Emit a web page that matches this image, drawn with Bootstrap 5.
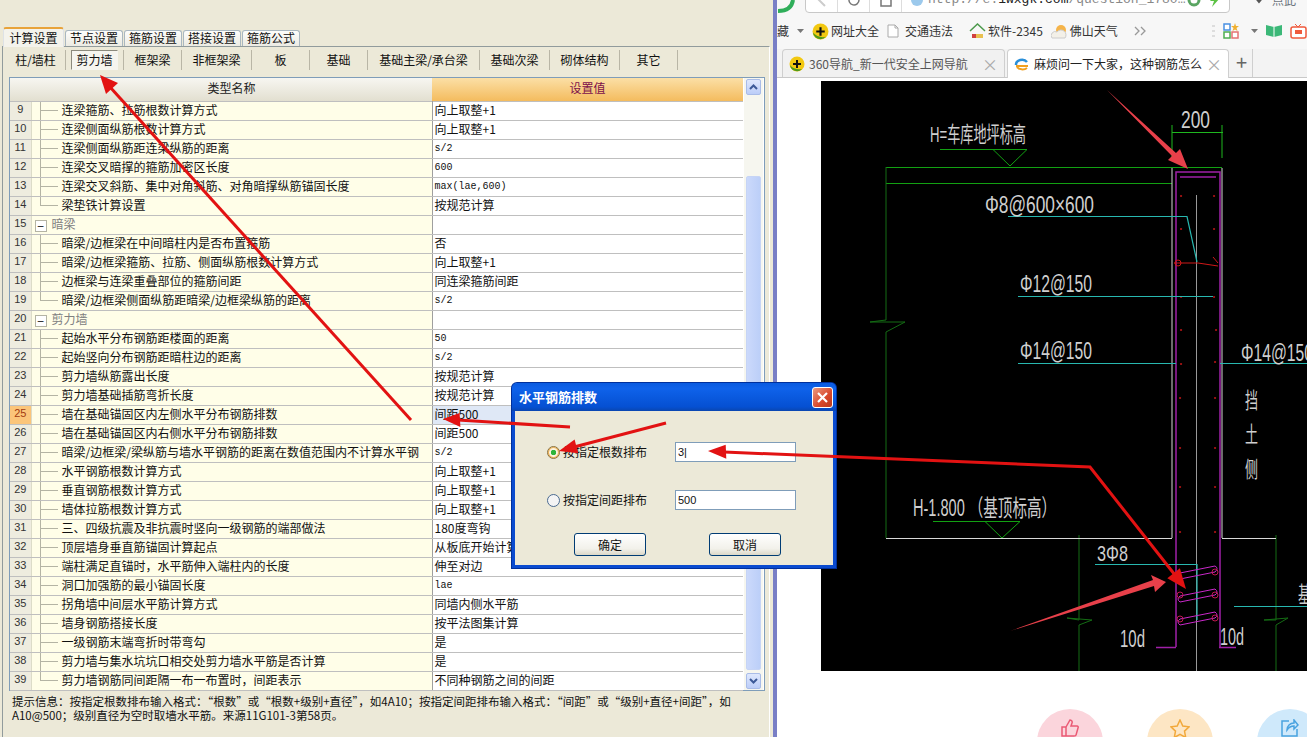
<!DOCTYPE html>
<html lang="zh-CN">
<head>
  <meta charset="UTF-8">
  <title>水平钢筋排数</title>
  <link href="https://cdn.jsdelivr.net/npm/bootstrap@5.3.0/dist/css/bootstrap.min.css" rel="stylesheet">
  <style>
    html, body { height: 737px; overflow: hidden; }
    body { font-family: "Noto Sans CJK SC", "Liberation Sans", sans-serif; font-size: 12px; color: #111; background: #fff; }
    .page-wrap { height: 737px; }

    /* left: settings window */
    .calc-pane { width: 773px; flex: none; background: #ece9d8; padding: 27px 0 0 2px; }
    .calc-tabs { padding-left: 1px; height: 19px; border: 0; gap: 1px; position: relative; z-index: 1; flex: none; }
    .calc-tabs .nav-link { font-size: 12px; line-height: 14px; height: 16px; margin: 0; padding: 0; width: 58px; text-align: center; color: #111; background: linear-gradient(#fdfdfb, #ecebe3); border: 1px solid #a9b7c0; border-bottom: 0; border-radius: 3px 3px 0 0; }
    .calc-tabs .nav-link.active { width: 61px; height: 20px; line-height: 17px; margin-bottom: -1px; background: #f4f3ec; border-top: 2px solid #e8a33a; color: #111; }
    .calc-box { width: 768px; height: 691px; border: 1px solid #919b9c; border-right-color: #fff; border-bottom: 0; background: #ece9d8; padding: 0 4px 0 6px; }
    .sub-bar { height: 30px; margin-left: -3px; padding-top: 3px; }
    .sub-btn { height: 20px; line-height: 19px; text-align: center; font-size: 12px; border-right: 1px solid #b9b6a6; flex: none; }
    .sub-btn span { display: inline-block; height: 20px; line-height: 18px; }
    .sub-btn .pressed { background: #f6f5ef; border: 1px solid; border-color: #8c8a7d #f6f5ef #f6f5ef #8c8a7d; width: 47px; }
    .w60 { width: 60px; } .w58 { width: 58px; } .w70 { width: 70px; } .w112 { width: 112px; }
    .grid-box { height: 614px; border: 1px solid #7f9db9; background: #fff; }
    .grid-main { width: 734px; flex: none; }
    .calc-grid { table-layout: fixed; width: 733px; border-collapse: collapse; }
    .calc-grid > thead > tr > th { height: 23px; padding: 0 0 2px; font-weight: 400; font-size: 12px; text-align: center; vertical-align: middle; border: 0; background: linear-gradient(#f7f6f1, #e2dfd0); color: #222; }
    .calc-grid > thead > tr > th.val-head { background: linear-gradient(#fbdfa6, #f4bc5e); color: #7c0f4a; }
    .calc-grid > tbody > tr > td { height: 19px; padding: 0; line-height: 15px; font-size: 12px; white-space: nowrap; overflow: hidden; border: 1px solid #bfbfbf; border-left: 0; border-right: 0; color: #111; }
    .calc-grid > tbody > tr > td.num-cell { text-align: center; background: #eeecdf; color: #333; font-size: 11px; font-family: "Liberation Sans", sans-serif; }
    .calc-grid > tbody > tr > td.num-cell.cur { background: #fbc57a; color: #a33b10; }
    .calc-grid > tbody > tr > td.name-cell { background-color: #fffee8; padding-left: 30px; border-left: 1px solid #dcdcc8; border-right: 1px solid #9f9f9f; background-image: linear-gradient(#b4b4a4, #b4b4a4), linear-gradient(#b4b4a4, #b4b4a4); background-repeat: no-repeat; background-position: 8px 0, 8px 50%; background-size: 1px 100%, 18px 1px; }
    .calc-grid > tbody > tr > td.name-cell.last { background-size: 1px 50%, 18px 1px; }
    .calc-grid > tbody > tr > td.name-cell.group { padding-left: 3px; background-image: none; color: #808080; }
    .calc-grid > tbody > tr > td.val-cell { padding-left: 2px; background: #fff; }
    .calc-grid > tbody > tr > td.val-cell.cur { background: #dfe8f6; }
    .calc-grid > tbody > tr > td.val-cell.latin { font-family: "Liberation Mono", monospace; font-size: 10px; line-height: 17px; }
    .fold-box { display: inline-block; width: 12px; height: 12px; line-height: 9px; border: 1px solid #b4b4a4; background: #fff; text-align: center; color: #111; margin-right: 5px; vertical-align: -2px; font-size: 12px; }
    .scroll-col { width: 19px; flex: none; background: #f6f6ef; padding: 1px 2px; }
    .scroll-btn { height: 16px; flex: none; background: linear-gradient(#dfe8fd, #bccdf8); border: 1px solid #a9bce8; border-radius: 2px; }
    .scroll-track { flex: 1; padding-top: 81px; }
    .scroll-thumb { height: 494px; background: linear-gradient(90deg, #cbd9fb, #bccff8); border: 1px solid #c6d4f5; border-radius: 2px; }
    .hint-text { font-size: 11.5px; line-height: 14px; padding: 3px 0 0 3px; color: #111; white-space: nowrap; }
    .split-bar { width: 4px; flex: none; background: #797fc6; }

    /* dialog */
    .xp-dlg { left: 512px; top: 383px; width: 324px; height: 185px; background: #ece9d8; border: 3px solid #0a4bd0; border-top: 0; border-radius: 5px 5px 0 0; z-index: 5; box-shadow: 0 0 0 1px #00309c; }
    .dlg-title { height: 28px; margin: 0 -3px; padding: 0 3px 0 7px; background: linear-gradient(#0a5be0, #0f62ea 20%, #0550d2 85%, #0a46b0); border-radius: 5px 5px 0 0; color: #fff; font-weight: 700; font-size: 13px; flex: none; }
    .dlg-close { width: 21px; height: 21px; padding: 0; border: 1px solid #fff; border-radius: 3px; background: linear-gradient(135deg, #ec9a80, #d8472b 60%, #b9391c); }
    .dlg-body { padding: 31px 0 0 32px; }
    .dlg-row { height: 20px; margin-bottom: 28px; }
    .dlg-row label { width: 112px; flex: none; font-size: 12px; }
    .xp-radio.form-check-input { width: 13px; height: 13px; margin: 0 3px 0 0; flex: none; background: #f4f4f4; border: 1px solid #4a6a90; float: none; }
    .xp-radio.form-check-input:checked { background: radial-gradient(circle, #2fb53b 0 2.5px, #fbf3df 3px); border: 1px solid #8a7240; box-shadow: inset 0 0 0 1px #f0b050; }
    .xp-input.form-control { width: 121px; height: 20px; min-height: 20px; padding: 0 2px; font-size: 11px; border: 1px solid #7f9db9; border-radius: 0; color: #111; font-family: "Liberation Sans", sans-serif; }
    .xp-btn.btn { width: 72px; height: 23px; padding: 0; font-size: 12px; line-height: 20px; color: #111; border: 1px solid #003c74; border-radius: 3px; background: linear-gradient(#fff, #f2f1ea 70%, #dcd8c8); }
    .dlg-btns { padding-left: 27px; margin-top: -5px; gap: 63px; }

    /* right: browser */
    .browser-pane { flex: 1; min-width: 0; overflow: hidden; background: #fff; }
    .browser-pane > * { flex: none; }
    .addr-row { height: 13px; overflow: hidden; background: #f7f7f7; }
    .addr-inner { height: 26px; margin-top: -13px; }
    .addr-logo { flex: none; align-self: flex-end; }
    .addr-box { margin-left: 10px; width: 425px; height: 26px; border: 1px solid #c8c8c8; border-radius: 4px; background: #fff; flex: none; color: #888; font-family: "Liberation Mono", monospace; font-size: 13px; }
    .addr-seg { width: 32px; height: 24px; border-right: 1px solid #ddd; flex: none; }
    .addr-url b { font-weight: 400; color: #222; }
    .fav-row { height: 36px; background: #f7f7f7; color: #333; font-size: 12px; }
    .fav-item { gap: 2px; flex: none; }
    .tab-row { height: 29px; background: #f3f3f3; border-bottom: 1px solid #c9c9c9; padding-left: 5px; gap: 2px; }
    .br-tab { width: 223px; height: 28px; padding: 0 6px; border: 1px solid #cfcfcf; border-bottom: 0; border-radius: 4px 4px 0 0; background: #f1f1f1; color: #555; font-size: 12px; gap: 4px; overflow: hidden; }
    .br-tab.on { background: #fff; color: #222; height: 29px; margin-bottom: -1px; width: 222px; }
    .br-tab .ttl { flex: 1; white-space: nowrap; overflow: hidden; }
    .tab-x { color: #aaa; font-size: 16px; line-height: 1; }
    .tab-plus { width: 22px; height: 28px; color: #666; font-size: 20px; line-height: 26px; text-align: center; border-right: 1px solid #cfcfcf; }
    .cad-wrap { margin: 3px 0 0 44px; width: 486px; height: 590px; background: #000; }
    .cad-wrap svg { display: block; }
    .cad-wrap text { font-family: "Liberation Sans", "Noto Sans CJK SC", sans-serif; fill: #cfcfcf; }
    .share-row { margin: 38px 0 0 260px; gap: 44px; }
    .share-dot { width: 66px; height: 66px; border-radius: 50%; flex: none; padding-top: 10px; }
    .dot-pink { background: #fbd5dc; } .dot-amber { background: #fde6c4; } .dot-sky { background: #cfe9fb; }
    .arrow-layer { left: 0; top: 0; z-index: 9; pointer-events: none; }
  </style>
</head>
<body>
<div class="page-wrap d-flex position-relative">

  <div class="calc-pane d-flex flex-column">
    <ul class="nav nav-tabs calc-tabs align-items-end">
      <li class="nav-item"><a class="nav-link active" href="#">计算设置</a></li>
      <li class="nav-item"><a class="nav-link" href="#">节点设置</a></li>
      <li class="nav-item"><a class="nav-link" href="#">箍筋设置</a></li>
      <li class="nav-item"><a class="nav-link" href="#">搭接设置</a></li>
      <li class="nav-item"><a class="nav-link" href="#">箍筋公式</a></li>
    </ul>
    <div class="calc-box flex-grow-1">
      <div class="sub-bar d-flex">
        <div class="sub-btn w60"><span>柱/墙柱</span></div>
        <div class="sub-btn w58"><span class="pressed">剪力墙</span></div>
        <div class="sub-btn w58"><span>框架梁</span></div>
        <div class="sub-btn w70"><span>非框架梁</span></div>
        <div class="sub-btn w58"><span>板</span></div>
        <div class="sub-btn w58"><span>基础</span></div>
        <div class="sub-btn w112"><span>基础主梁/承台梁</span></div>
        <div class="sub-btn w70"><span>基础次梁</span></div>
        <div class="sub-btn w70"><span>砌体结构</span></div>
        <div class="sub-btn w58"><span>其它</span></div>
      </div>
      <div class="grid-box d-flex">
        <div class="grid-main">
          <table class="table calc-grid mb-0">
            <colgroup><col style="width:21px"><col style="width:401px"><col style="width:311px"></colgroup>
            <thead><tr><th></th><th>类型名称</th><th class="val-head">设置值</th></tr></thead>
            <tbody>
              <tr><td class="num-cell">9</td><td class="name-cell">连梁箍筋、拉筋根数计算方式</td><td class="val-cell">向上取整+1</td></tr>
              <tr><td class="num-cell">10</td><td class="name-cell">连梁侧面纵筋根数计算方式</td><td class="val-cell">向上取整+1</td></tr>
              <tr><td class="num-cell">11</td><td class="name-cell">连梁侧面纵筋距连梁纵筋的距离</td><td class="val-cell latin">s/2</td></tr>
              <tr><td class="num-cell">12</td><td class="name-cell">连梁交叉暗撑的箍筋加密区长度</td><td class="val-cell latin">600</td></tr>
              <tr><td class="num-cell">13</td><td class="name-cell">连梁交叉斜筋、集中对角斜筋、对角暗撑纵筋锚固长度</td><td class="val-cell latin">max(lae,600)</td></tr>
              <tr><td class="num-cell">14</td><td class="name-cell last">梁垫铁计算设置</td><td class="val-cell">按规范计算</td></tr>
              <tr><td class="num-cell">15</td><td class="name-cell group"><span class="fold-box">−</span>暗梁</td><td class="val-cell"></td></tr>
              <tr><td class="num-cell">16</td><td class="name-cell">暗梁/边框梁在中间暗柱内是否布置箍筋</td><td class="val-cell">否</td></tr>
              <tr><td class="num-cell">17</td><td class="name-cell">暗梁/边框梁箍筋、拉筋、侧面纵筋根数计算方式</td><td class="val-cell">向上取整+1</td></tr>
              <tr><td class="num-cell">18</td><td class="name-cell">边框梁与连梁重叠部位的箍筋间距</td><td class="val-cell">同连梁箍筋间距</td></tr>
              <tr><td class="num-cell">19</td><td class="name-cell last">暗梁/边框梁侧面纵筋距暗梁/边框梁纵筋的距离</td><td class="val-cell latin">s/2</td></tr>
              <tr><td class="num-cell">20</td><td class="name-cell group"><span class="fold-box">−</span>剪力墙</td><td class="val-cell"></td></tr>
              <tr><td class="num-cell">21</td><td class="name-cell">起始水平分布钢筋距楼面的距离</td><td class="val-cell latin">50</td></tr>
              <tr><td class="num-cell">22</td><td class="name-cell">起始竖向分布钢筋距暗柱边的距离</td><td class="val-cell latin">s/2</td></tr>
              <tr><td class="num-cell">23</td><td class="name-cell">剪力墙纵筋露出长度</td><td class="val-cell">按规范计算</td></tr>
              <tr><td class="num-cell">24</td><td class="name-cell">剪力墙基础插筋弯折长度</td><td class="val-cell">按规范计算</td></tr>
              <tr><td class="num-cell cur">25</td><td class="name-cell">墙在基础锚固区内左侧水平分布钢筋排数</td><td class="val-cell cur">间距500</td></tr>
              <tr><td class="num-cell">26</td><td class="name-cell">墙在基础锚固区内右侧水平分布钢筋排数</td><td class="val-cell">间距500</td></tr>
              <tr><td class="num-cell">27</td><td class="name-cell">暗梁/边框梁/梁纵筋与墙水平钢筋的距离在数值范围内不计算水平钢</td><td class="val-cell latin">s/2</td></tr>
              <tr><td class="num-cell">28</td><td class="name-cell">水平钢筋根数计算方式</td><td class="val-cell">向上取整+1</td></tr>
              <tr><td class="num-cell">29</td><td class="name-cell">垂直钢筋根数计算方式</td><td class="val-cell">向上取整+1</td></tr>
              <tr><td class="num-cell">30</td><td class="name-cell">墙体拉筋根数计算方式</td><td class="val-cell">向上取整+1</td></tr>
              <tr><td class="num-cell">31</td><td class="name-cell">三、四级抗震及非抗震时竖向一级钢筋的端部做法</td><td class="val-cell">180度弯钩</td></tr>
              <tr><td class="num-cell">32</td><td class="name-cell">顶层墙身垂直筋锚固计算起点</td><td class="val-cell">从板底开始计算</td></tr>
              <tr><td class="num-cell">33</td><td class="name-cell">端柱满足直锚时，水平筋伸入端柱内的长度</td><td class="val-cell">伸至对边</td></tr>
              <tr><td class="num-cell">34</td><td class="name-cell">洞口加强筋的最小锚固长度</td><td class="val-cell latin">lae</td></tr>
              <tr><td class="num-cell">35</td><td class="name-cell">拐角墙中间层水平筋计算方式</td><td class="val-cell">同墙内侧水平筋</td></tr>
              <tr><td class="num-cell">36</td><td class="name-cell">墙身钢筋搭接长度</td><td class="val-cell">按平法图集计算</td></tr>
              <tr><td class="num-cell">37</td><td class="name-cell">一级钢筋末端弯折时带弯勾</td><td class="val-cell">是</td></tr>
              <tr><td class="num-cell">38</td><td class="name-cell">剪力墙与集水坑坑口相交处剪力墙水平筋是否计算</td><td class="val-cell">是</td></tr>
              <tr><td class="num-cell">39</td><td class="name-cell last">剪力墙钢筋同间距隔一布一布置时，间距表示</td><td class="val-cell">不同种钢筋之间的间距</td></tr>
            </tbody>
          </table>
        </div>
        <div class="scroll-col d-flex flex-column">
          <div class="scroll-btn d-flex align-items-center justify-content-center">
            <svg width="9" height="6" viewBox="0 0 9 6"><path d="M1 5 4.500 1.500 8 5" fill="none" stroke="#3d5a98" stroke-width="2"/></svg>
          </div>
          <div class="scroll-track"><div class="scroll-thumb"></div></div>
          <div class="scroll-btn d-flex align-items-center justify-content-center">
            <svg width="9" height="6" viewBox="0 0 9 6"><path d="M1 1 4.500 4.500 8 1" fill="none" stroke="#3d5a98" stroke-width="2"/></svg>
          </div>
        </div>
      </div>
      <div class="hint-text">提示信息：按指定根数排布输入格式：“根数”或“根数+级别+直径”，如4A10；按指定间距排布输入格式：“间距”或“级别+直径+间距”，如<br>A10@500；级别直径为空时取墙水平筋。来源11G101-3第58页。</div>
    </div>
  </div>

  <div class="split-bar"></div>

  <div class="browser-pane d-flex flex-column">
    <div class="addr-row">
      <div class="addr-inner d-flex align-items-center">
        <svg class="addr-logo" width="18" height="13" viewBox="0 0 18 13"><path d="M16 0c-1 7-6 11-15 11" fill="none" stroke="#2fae5a" stroke-width="4"/></svg>
        <div class="addr-box d-flex align-items-center">
          <div class="addr-seg d-flex align-items-center justify-content-center"><svg width="10" height="14" viewBox="0 0 10 14"><path d="M8 1 2 7l6 6" fill="none" stroke="#ccc" stroke-width="2"/></svg></div>
          <div class="addr-seg d-flex align-items-center justify-content-center"><svg width="14" height="14" viewBox="0 0 14 14"><path d="M12 7a5 5 0 1 1-2-4" fill="none" stroke="#777" stroke-width="1.500"/></svg></div>
          <div class="addr-seg d-flex align-items-center justify-content-center"><svg width="14" height="14" viewBox="0 0 14 14"><path d="M2 7l5-5 5 5v6H2z" fill="none" stroke="#777" stroke-width="1.500"/></svg></div>
          <svg class="ms-2" width="14" height="14" viewBox="0 0 14 14"><circle cx="7" cy="7" r="6" fill="#9cc9ec"/></svg>
          <span class="addr-url ms-1 flex-grow-1 text-nowrap overflow-hidden">http://e.<b>1wxgk.com</b>/question_1780…</span>
          <svg width="14" height="14" viewBox="0 0 14 14"><circle cx="7" cy="7" r="5" fill="none" stroke="#5aa562" stroke-width="3"/></svg>
          <svg class="mx-2" width="12" height="14" viewBox="0 0 12 14"><path d="M8 0 1 8h4l-2 6 8-9H7z" fill="#5cc245"/></svg>
        </div>
        <svg class="ms-4" width="10" height="8" viewBox="0 0 10 8"><path d="M1 1l4 5 4-5" fill="none" stroke="#555" stroke-width="2"/></svg>
        <span class="ms-2 text-secondary">点此</span>
      </div>
    </div>
    <div class="fav-row d-flex align-items-center">
      <span class="fav-item">藏</span>
      <svg class="ms-2" width="7" height="4" viewBox="0 0 7 4"><path d="M0 0h7L3.500 4z" fill="#777"/></svg>
      <div class="fav-item d-flex align-items-center ms-2">
        <svg width="17" height="17" viewBox="0 0 16 16"><circle cx="8" cy="8" r="7.500" fill="#f2c811"/><path d="M1 9a7 7 0 0 0 12 4C9 14 4 13 1 9z" fill="#4f9a1c"/><path d="M7 4h2v3h3v2H9v3H7V9H4V7h3z" fill="#111"/></svg>
        <span>网址大全</span>
      </div>
      <div class="fav-item d-flex align-items-center ms-2">
        <svg width="12" height="14" viewBox="0 0 12 14"><path d="M1 1h7l3 3v9H1z" fill="#fff" stroke="#aaa"/><path d="M8 1v3h3" fill="none" stroke="#aaa"/></svg>
        <span class="ms-1">交通违法</span>
      </div>
      <div class="fav-item d-flex align-items-center ms-3">
        <svg width="17" height="16" viewBox="0 0 17 16"><path d="M1 8l7.500-7L16 8" fill="none" stroke="#4d9a4d" stroke-width="1.500"/><path d="M3 11h11v4H3z" fill="#e8c050"/><path d="M3 11h4v4H3z" fill="#d04040"/></svg>
        <span>软件-2345</span>
      </div>
      <div class="fav-item d-flex align-items-center ms-2">
        <svg width="17" height="15" viewBox="0 0 17 15"><circle cx="10" cy="6" r="5" fill="#f5b44a"/><path d="M1 14a4 4 0 0 1 5-6 4 4 0 0 1 8 6z" fill="#f3f0e8" stroke="#ccc"/></svg>
        <span>佛山天气</span>
      </div>
      <svg class="ms-3" width="12" height="10" viewBox="0 0 12 10"><path d="M1 1l4 4-4 4M7 1l4 4-4 4" fill="none" stroke="#999" stroke-width="1.300"/></svg>
      <div class="ms-auto d-flex align-items-center gap-2">
        <svg width="3" height="14" viewBox="0 0 3 14"><path d="M0 1h3v2H0zM0 6h3v2H0zM0 11h3v2H0z" fill="#ddd"/></svg>
        <svg width="16" height="16" viewBox="0 0 16 16"><rect x="1" y="1" width="6" height="6" fill="#fff" stroke="#4a90e2" stroke-width="1.500"/><path d="M12 0l1 3h3l-2.500 2 1 3L12 6.500 9.500 8l1-3L8 3h3z" fill="#f0b030"/><rect x="1" y="9" width="6" height="6" fill="#fff" stroke="#4caf50" stroke-width="1.500"/><rect x="9" y="9" width="6" height="6" fill="#fff" stroke="#e57373" stroke-width="1.500"/></svg>
        <svg class="ms-1" width="7" height="4" viewBox="0 0 7 4"><path d="M0 0h7L3.500 4z" fill="#777"/></svg>
        <svg width="16" height="14" viewBox="0 0 16 14"><path d="M0 1l8 2 8-2v10l-8 2-8-2z" fill="#3cb878"/><path d="M8 3v10" stroke="#fff"/></svg>
        <svg width="17" height="15" viewBox="0 0 17 15"><rect x="1" y="3" width="15" height="11" rx="2" fill="#fff" stroke="#f05a3c" stroke-width="1.500"/><rect x="5" y="6" width="7" height="4" fill="#f05a3c"/><path d="M5 0l3 3 3-3" fill="none" stroke="#f05a3c"/></svg>
      </div>
    </div>
    <div class="tab-row d-flex align-items-end">
      <div class="br-tab d-flex align-items-center">
        <svg width="16" height="16" viewBox="0 0 16 16" class="flex-shrink-0"><circle cx="8" cy="8" r="7.500" fill="#f2c811"/><path d="M1 9a7 7 0 0 0 12 4C9 14 4 13 1 9z" fill="#4f9a1c"/><path d="M7 4h2v3h3v2H9v3H7V9H4V7h3z" fill="#111"/></svg>
        <span class="ttl">360导航_新一代安全上网导航</span><span class="tab-x">×</span>
      </div>
      <div class="br-tab on d-flex align-items-center">
        <svg width="16" height="14" viewBox="0 0 16 14" class="flex-shrink-0"><path d="M2 8a6 5 0 0 1 11-3" fill="none" stroke="#2a8fd8" stroke-width="2.500"/><path d="M2 9h12M3 10a6 4 0 0 0 10 1" fill="none" stroke="#f0a020" stroke-width="2"/></svg>
        <span class="ttl">麻烦问一下大家，这种钢筋怎么</span><span class="tab-x">×</span>
      </div>
      <div class="tab-plus">+</div>
    </div>
    <div class="cad-wrap">
      <svg width="486" height="590" viewBox="821 81 486 590" fill="none">
        <path d="M886 167.500H1222M886 183.500H1172M940 149.500H1027M993 149.500 1010 166 1027 149.500" stroke="#12a012"/>
        <path d="M1172 132.500H1223M1172 125V158M1222 125V158" stroke="#1fb81f"/>
        <path d="M886 167V320L870 322 905 322 886 332V538" stroke="#146c14"/>
        <path d="M933 521.500H1020M985 521.500 1002 538 1020 521.500" stroke="#12a012"/>
        <path d="M1079 535V620L1067 618 1092 620 1079 625V671M1276 535V620L1264 620 1288 618 1276 625V671" stroke="#146c14"/>
        <path d="M886 538.500H1172M1222 538.500H1276M1172 168V538M1222 168V538" stroke="#d8d8d8" />
        <path d="M1196.500 195V671" stroke="#999"/>
        <path d="M1176 647V172H1220V647M1156 647.500H1176M1219 647.500H1236M1180 177H1216" stroke="#a020a8" stroke-width="1.500"/>
        <path d="M1181 196h.1M1214 196h.1M1181 229h.1M1214 229h.1M1181 297h.1M1214 297h.1M1181 330h.1M1216 330h.1M1181 364h.1M1215 362h.1M1180 398h.1M1215 398h.1M1180 448h.1M1215 448h.1M1180 487h.1M1215 487h.1M1180 532h.1M1215 532h.1" stroke="#a81414" stroke-width="2.200" stroke-linecap="round"/>
        <path d="M1174 263h10l14 0 20 3M1213 257l5 6" stroke="#d01818"/>
        <circle cx="1178" cy="263" r="3" stroke="#d01818"/>
        <path d="M1008 216.500H1187L1197 262M1018 296.500H1213M1018 363.500H1176M1220 363.500H1307M1095 564.500H1197V620M1234 606.500H1307" stroke="#28b8b0" stroke-width="1.200"/>
        <path d="M1180 573l35-7q4 2 0 6l-35 7q-4-3 0-6zM1180 596l35-7q4 3 0 6l-35 7q-4-3 0-6zM1180 619l35-7q4 3 0 6l-35 7q-4-3 0-6z" stroke="#c828c8"/>
        <circle cx="1180" cy="595" r="3" stroke="#c01850"/><circle cx="1215" cy="595" r="3" stroke="#c01850"/><circle cx="1180" cy="619" r="3" stroke="#c01850"/><circle cx="1215" cy="618" r="3" stroke="#c01850"/><circle cx="1215" cy="572" r="3" stroke="#c01850"/>
        <text x="1181" y="128" font-size="24" textLength="29" lengthAdjust="spacingAndGlyphs">200</text>
        <text x="930" y="142" font-size="22" textLength="96" lengthAdjust="spacingAndGlyphs">H=车库地坪标高</text>
        <text x="985" y="213" font-size="23" textLength="109" lengthAdjust="spacingAndGlyphs">Φ8@600×600</text>
        <text x="1020" y="292" font-size="23" textLength="72" lengthAdjust="spacingAndGlyphs">Φ12@150</text>
        <text x="1020" y="359" font-size="23" textLength="72" lengthAdjust="spacingAndGlyphs">Φ14@150</text>
        <text x="1241" y="361" font-size="23" textLength="72" lengthAdjust="spacingAndGlyphs">Φ14@150</text>
        <text x="1245" y="408" font-size="22" textLength="13" lengthAdjust="spacingAndGlyphs">挡</text>
        <text x="1245" y="442" font-size="22" textLength="13" lengthAdjust="spacingAndGlyphs">土</text>
        <text x="1245" y="477" font-size="22" textLength="13" lengthAdjust="spacingAndGlyphs">侧</text>
        <text x="913" y="516" font-size="23" textLength="143" lengthAdjust="spacingAndGlyphs">H-1.800 （基顶标高）</text>
        <text x="1097" y="561" font-size="22" textLength="31" lengthAdjust="spacingAndGlyphs">3Φ8</text>
        <text x="1120" y="647" font-size="23" textLength="25" lengthAdjust="spacingAndGlyphs">10d</text>
        <text x="1220" y="645" font-size="23" textLength="24" lengthAdjust="spacingAndGlyphs">10d</text>
        <text x="1298" y="602" font-size="22" textLength="13" lengthAdjust="spacingAndGlyphs">基</text>
      </svg>
    </div>
    <div class="share-row d-flex">
      <div class="share-dot dot-pink d-flex justify-content-center">
        <svg width="18" height="18" viewBox="0 0 18 18" fill="none" stroke="#ea5a74" stroke-width="1.500"><path d="M5 8h-4v9h4zM5 8l4-7c2 0 2.500 2 2 3l-1 3h6c1 0 1.500 1 1 2l-2 7c0 1-1 1-2 1H5"/></svg>
      </div>
      <div class="share-dot dot-amber d-flex justify-content-center">
        <svg width="20" height="20" viewBox="0 0 20 20" fill="none" stroke="#f2a93b" stroke-width="1.500"><path d="M10 1l2.800 6 6.200.8-4.500 4.300 1.200 6.400L10 15.400l-5.700 3.100 1.200-6.400L1 7.800 7.200 7z"/></svg>
      </div>
      <div class="share-dot dot-sky d-flex justify-content-center">
        <svg width="18" height="18" viewBox="0 0 18 18" fill="none" stroke="#4aa3e0" stroke-width="1.500"><path d="M8 2H1v15h15v-7M6 11c0-4 3-7 7-7V1l4 5-4 4V7c-3 0-5 1-7 4z"/></svg>
      </div>
    </div>
  </div>

  <div class="xp-dlg position-absolute d-flex flex-column">
    <div class="dlg-title d-flex align-items-center justify-content-between">
      <span>水平钢筋排数</span>
      <button type="button" class="dlg-close d-flex align-items-center justify-content-center">
        <svg width="11" height="11" viewBox="0 0 11 11"><path d="M1 1l9 9M10 1l-9 9" stroke="#fff" stroke-width="2.200"/></svg>
      </button>
    </div>
    <div class="dlg-body">
      <div class="dlg-row d-flex align-items-center">
        <input class="form-check-input xp-radio" type="radio" name="pf" id="pf1" checked>
        <label for="pf1">按指定根数排布</label>
        <input class="form-control xp-input" type="text" value="3|">
      </div>
      <div class="dlg-row d-flex align-items-center">
        <input class="form-check-input xp-radio" type="radio" name="pf" id="pf2">
        <label for="pf2">按指定间距排布</label>
        <input class="form-control xp-input" type="text" value="500">
      </div>
      <div class="dlg-btns d-flex">
        <button type="button" class="btn xp-btn">确定</button>
        <button type="button" class="btn xp-btn">取消</button>
      </div>
    </div>
  </div>

  <svg class="arrow-layer position-absolute" width="1307" height="737" viewBox="0 0 1307 737">
    <g stroke="#e21212" stroke-width="3" fill="#e21212">
      <path d="M411 420 110 87" fill="none"/>
      <path d="M100 75 118 83 106 94z" stroke="none"/>
      <path d="M570 427 458 420" fill="none"/>
      <path d="M443 419 459.600 413 460.400 427z" stroke="none"/>
      <path d="M666 423 574 447" fill="none"/>
      <path d="M559 451 578.200 453.200 574.600 439.600z" stroke="none"/>
      <path d="M724 452 1090 467 1175 575" fill="none"/>
      <path d="M708 451 725.700 444.800 726.300 458.800z" stroke="none"/>
      <path d="M1186 589 1179.900 568.300 1167.300 578.300z" stroke="none"/>
    </g>
    <path d="M1107 90 1176 153 1180 149 1188 169 1168 160 1172 156z" fill="#e8404a"/>
    <path d="M1010 631 1153 580 1151 575 1166 582 1155 592 1154 586z" fill="#e8404a"/>
  </svg>
</div>
<script src="https://cdn.jsdelivr.net/npm/bootstrap@5.3.0/dist/js/bootstrap.bundle.min.js"></script>
</body>
</html>
